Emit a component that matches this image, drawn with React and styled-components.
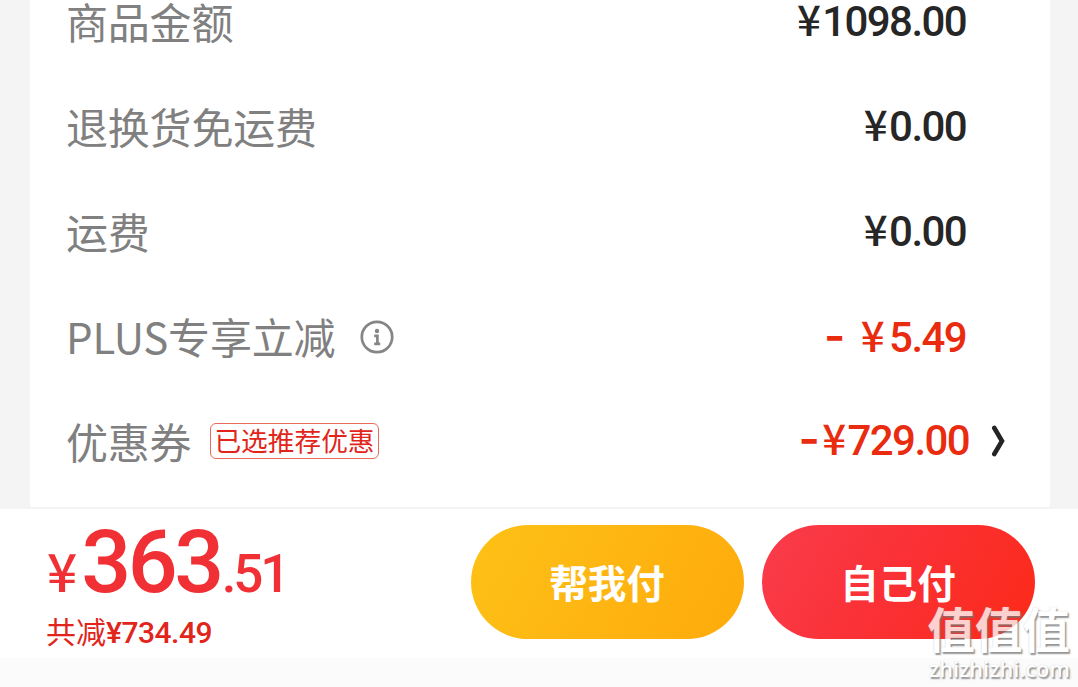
import styled, { createGlobalStyle } from "styled-components";

const GlobalStyle = createGlobalStyle`
  * {
    box-sizing: border-box;
  }
  body {
    margin: 0;
    background: #f4f4f4;
    font-family: "Noto Sans CJK SC", sans-serif;
  }
`;

const Page = styled.div`
  position: relative;
  display: flex;
  flex-direction: column;
  width: 1078px;
  height: 687px;
  overflow: hidden;
  background: #fbfbfb;
`;

const Scroller = styled.main`
  height: 509px;
  padding: 0 28px 2px 30px;
  background: #f4f4f4;
  overflow: hidden;
`;

const Card = styled.div`
  height: 507px;
  padding: 0 36px;
  background: #fff;
  overflow: hidden;
`;

// the list is scrolled a little, so the first row starts above the card
const List = styled.div`
  margin-top: -30px;
`;

const Row = styled.div`
  display: flex;
  align-items: center;
  justify-content: space-between;
  height: 105px;
`;

const Label = styled.div`
  display: flex;
  align-items: center;
  padding-bottom: 4px;
  color: #808080;
  font-size: 42px;
  line-height: 56px;
  letter-spacing: -0.2px;
  white-space: nowrap;

  svg {
    margin: 2px 0 0 25px;
  }
`;

const Value = styled.div`
  display: flex;
  align-items: center;
  padding-right: ${(props) => (props.$link ? "8px" : "48px")};
  padding-bottom: ${(props) => (props.$link ? "6px" : "2px")};

  svg {
    margin: 2px 0 0 22px;
  }
`;

const Amount = styled.div`
  display: flex;
  align-items: baseline;
  height: 50px;
  color: ${(props) => (props.$discount ? "#e92b10" : "#262626")};
  font-family: Roboto, sans-serif;
  font-size: 42px;
  font-weight: 500;
  line-height: 50px;
  letter-spacing: -1.6px;
`;

const Minus = styled.span`
  margin-right: ${(props) => (props.$wide ? "17px" : "4px")};
  font-family: Inter, sans-serif;
  font-size: 46px;
  font-weight: 600;
  line-height: 1;
`;

const Yen = styled.span`
  margin-right: ${(props) => (props.$wide ? "6px" : "3px")};
  font-family: "Noto Sans CJK SC", sans-serif;
  font-weight: 500;
  line-height: 1;
`;

const Tag = styled.span`
  height: 36px;
  margin: 0 0 0 19px;
  padding: 0 3px;
  border: 1px solid #ea6a5b;
  border-radius: 6px;
  color: #e1251b;
  font-size: 26.7px;
  line-height: 31px;
  letter-spacing: 0;
`;

const Footer = styled.footer`
  display: flex;
  align-items: flex-start;
  justify-content: space-between;
  height: 149px;
  padding: 16px 43px 0 46px;
  background: #fff;
`;

const Summary = styled.div`
  display: flex;
  flex-direction: column;
  white-space: nowrap;
`;

const Total = styled.div`
  display: flex;
  align-items: baseline;
  height: 86px;
  color: #f03034;
  font-family: Roboto, sans-serif;
  font-size: 53px;
  font-weight: 500;
  line-height: 74px;

  ${Yen} {
    margin: 0 4px 0 1px;
  }
`;

const Whole = styled.span`
  font-size: 88px;
  letter-spacing: -3.5px;
`;

const Fraction = styled.span`
  margin-left: 1px;
  letter-spacing: -3.2px;
`;

const Saved = styled.div`
  color: #e1251b;
  font-size: 30px;
  line-height: 38px;

  b {
    font-family: Roboto, sans-serif;
    font-weight: 500;
    letter-spacing: -0.5px;
  }
`;

const Actions = styled.div`
  display: flex;
  gap: 18px;
`;

const PayButton = styled.button`
  width: 273px;
  height: 114px;
  padding: 0 1px 2px 0;
  border: none;
  border-radius: 57px;
  background: ${(props) =>
    props.$primary
      ? "linear-gradient(120deg, #fa3c4c 0%, #fa3034 50%, #fd2a18 100%)"
      : "linear-gradient(120deg, #fec216 0%, #feb512 50%, #feab0a 100%)"};
  color: #fff;
  font-family: inherit;
  font-size: 38.5px;
  font-weight: 700;
  cursor: pointer;
`;

const Watermark = styled.div`
  position: absolute;
  right: 8px;
  bottom: 3px;
  display: flex;
  flex-direction: column;
  align-items: flex-end;
  color: #fff;
  font-weight: 700;
  text-shadow: 1.5px 1.5px 1.5px #777, 0 0 1px #bbb;
  opacity: 0.78;
  pointer-events: none;
`;

const WatermarkName = styled.span`
  font-size: 47.5px;
  line-height: 52px;
`;

const WatermarkSite = styled.span`
  font-family: "Open Sans", sans-serif;
  font-size: 21.7px;
  font-weight: 600;
  line-height: 30px;
`;

const InfoIcon = () => (
  <svg width="34" height="34" viewBox="0 0 34 34" fill="none">
    <circle cx="17" cy="17" r="15.2" stroke="#858585" strokeWidth="2.7" />
    <circle cx="17" cy="11" r="2.2" fill="#858585" />
    <path d="M14.2 15.8H17.4V23.6M14.2 23.8H20.2" stroke="#858585" strokeWidth="2.7" />
  </svg>
);

const Chevron = () => (
  <svg width="15" height="32" viewBox="0 0 15 32" fill="none">
    <path
      d="M3.3 3L11 16L3.3 29"
      stroke="#242424"
      strokeWidth="4.6"
      strokeLinecap="round"
    />
  </svg>
);

const rows = [
  { label: "商品金额", amount: "1098.00" },
  { label: "退换货免运费", amount: "0.00" },
  { label: "运费", amount: "0.00" },
  { label: "PLUS专享立减", amount: "5.49", discount: true, info: true },
  {
    label: "优惠券",
    amount: "729.00",
    discount: true,
    tag: "已选推荐优惠",
    link: true,
  },
];

const App = () => {
  return (
    <Page>
      <GlobalStyle />
      <Scroller>
        <Card>
          <List>
            {rows.map((row) => (
              <Row key={row.label}>
                <Label>
                  {row.label}
                  {row.info && <InfoIcon />}
                  {row.tag && <Tag>{row.tag}</Tag>}
                </Label>
                <Value $link={row.link}>
                  <Amount $discount={row.discount}>
                    {row.discount && <Minus $wide={!row.link}>-</Minus>}
                    <Yen $wide={row.info}>¥</Yen>
                    {row.amount}
                  </Amount>
                  {row.link && <Chevron />}
                </Value>
              </Row>
            ))}
          </List>
        </Card>
      </Scroller>
      <Footer>
        <Summary>
          <Total>
            <Yen>¥</Yen>
            <Whole>363</Whole>
            <Fraction>.51</Fraction>
          </Total>
          <Saved>
            共减<b>¥734.49</b>
          </Saved>
        </Summary>
        <Actions>
          <PayButton>帮我付</PayButton>
          <PayButton $primary>自己付</PayButton>
        </Actions>
      </Footer>
      <Watermark>
        <WatermarkName>值值值</WatermarkName>
        <WatermarkSite>zhizhizhi.com</WatermarkSite>
      </Watermark>
    </Page>
  );
};

export default App;
